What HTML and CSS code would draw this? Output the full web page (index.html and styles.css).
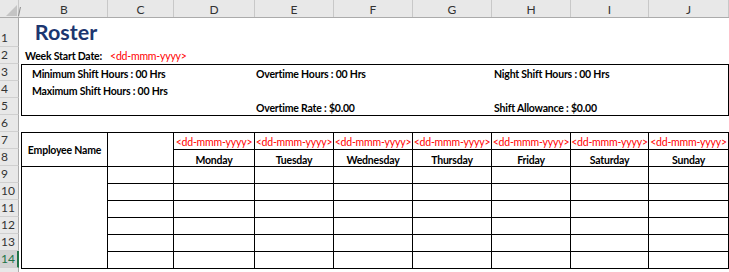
FILE: index.html
```html
<!DOCTYPE html>
<html lang="en">
<head>
<meta charset="utf-8">
<title>Roster</title>
<link rel="stylesheet" href="styles.css">
</head>
<body>
<div class="sheet">
  <div class="colhead">
    <div class="corner"><svg width="11" height="11" viewBox="0 0 11 11"><polygon points="11,0 11,11 0,11" fill="#c4c4c4"/></svg></div>
    <div class="hidden-a"><span class="tick"></span></div>
    <div class="ch w-b">B</div>
    <div class="ch w-c">C</div>
    <div class="ch w-d">D</div>
    <div class="ch w-e">E</div>
    <div class="ch w-f">F</div>
    <div class="ch w-g">G</div>
    <div class="ch w-h">H</div>
    <div class="ch w-i">I</div>
    <div class="ch w-j">J</div>
  </div>
  <div class="body">
    <div class="rowheads">
      <div class="rh tall">1</div>
      <div class="rh">2</div>
      <div class="rh">3</div>
      <div class="rh">4</div>
      <div class="rh">5</div>
      <div class="rh">6</div>
      <div class="rh">7</div>
      <div class="rh">8</div>
      <div class="rh">9</div>
      <div class="rh">10</div>
      <div class="rh">11</div>
      <div class="rh">12</div>
      <div class="rh">13</div>
      <div class="rh sel">14</div>
      <div class="rh"></div>
    </div>
    <div class="gap-a"></div>
    <div class="content">
      <div class="title-row"><h1 class="title">Roster</h1></div>
      <div class="week-row">
        <span class="week-label">Week Start Date:</span>
        <span class="red week-date">&lt;dd-mmm-yyyy&gt;</span>
      </div>
      <div class="info-box">
        <div class="info first">Minimum Shift Hours : 00 Hrs</div>
        <div class="info mid">Overtime Hours : 00 Hrs</div>
        <div class="info last">Night Shift Hours : 00 Hrs</div>
        <div class="info first">Maximum Shift Hours : 00 Hrs</div>
        <div class="info mid"></div>
        <div class="info last"></div>
        <div class="info first"></div>
        <div class="info mid">Overtime Rate : $0.00</div>
        <div class="info last">Shift Allowance : $0.00</div>
      </div>
      <div class="spacer"></div>
      <div class="roster">
        <div class="cell emp">Employee Name</div>
        <div class="cell blank2"></div>
        <div class="cell red date">&lt;dd-mmm-yyyy&gt;</div>
        <div class="cell red date">&lt;dd-mmm-yyyy&gt;</div>
        <div class="cell red date">&lt;dd-mmm-yyyy&gt;</div>
        <div class="cell red date">&lt;dd-mmm-yyyy&gt;</div>
        <div class="cell red date">&lt;dd-mmm-yyyy&gt;</div>
        <div class="cell red date">&lt;dd-mmm-yyyy&gt;</div>
        <div class="cell red date">&lt;dd-mmm-yyyy&gt;</div>
        <div class="cell day">Monday</div>
        <div class="cell day">Tuesday</div>
        <div class="cell day">Wednesday</div>
        <div class="cell day">Thursday</div>
        <div class="cell day">Friday</div>
        <div class="cell day">Saturday</div>
        <div class="cell day">Sunday</div>
        <div class="cell empblock"></div>
        <div class="cell"></div><div class="cell"></div><div class="cell"></div><div class="cell"></div><div class="cell"></div><div class="cell"></div><div class="cell"></div><div class="cell"></div>
        <div class="cell"></div><div class="cell"></div><div class="cell"></div><div class="cell"></div><div class="cell"></div><div class="cell"></div><div class="cell"></div><div class="cell"></div>
        <div class="cell"></div><div class="cell"></div><div class="cell"></div><div class="cell"></div><div class="cell"></div><div class="cell"></div><div class="cell"></div><div class="cell"></div>
        <div class="cell"></div><div class="cell"></div><div class="cell"></div><div class="cell"></div><div class="cell"></div><div class="cell"></div><div class="cell"></div><div class="cell"></div>
        <div class="cell"></div><div class="cell"></div><div class="cell"></div><div class="cell"></div><div class="cell"></div><div class="cell"></div><div class="cell"></div><div class="cell"></div>
        <div class="cell"></div><div class="cell"></div><div class="cell"></div><div class="cell"></div><div class="cell"></div><div class="cell"></div><div class="cell"></div><div class="cell"></div>
      </div>
    </div>
  </div>
</div>
</body>
</html>
```
FILE: styles.css
```css
* { box-sizing: border-box; }
html, body {
  margin: 0;
  padding: 0;
  background: #fff;
  overflow: hidden;
}
.sheet {
  width: 729px;
  height: 272px;
  overflow: hidden;
  font-family: Lato, "Liberation Sans", sans-serif;
  font-size: 10.5px;
  letter-spacing: -0.2px;
  color: #000;
}

/* column header */
.colhead {
  display: flex;
  height: 18px;
  background: #e8e8e8;
  border-bottom: 1px solid #ababab;
  letter-spacing: 0;
}
.corner {
  width: 19px;
  flex: none;
  border-right: 1px solid #c8c8c8;
  display: flex;
  align-items: flex-end;
  justify-content: flex-end;
  padding: 0 1px 1px 0;
}
.hidden-a {
  width: 2px;
  flex: none;
  position: relative;
}
.tick {
  position: absolute;
  left: 0;
  top: 7px;
  width: 1px;
  height: 9px;
  background: #8a8a8a;
  transform: skewX(-12deg);
}
.ch {
  flex: none;
  border-right: 1px solid #c8c8c8;
  display: flex;
  align-items: center;
  justify-content: center;
  font-size: 12px;
  color: #333;
  padding-top: 1px;
}
.w-b { width: 87px; }
.w-c { width: 66px; }
.w-d { width: 81px; }
.w-e, .w-f, .w-g, .w-h { width: 79px; }
.w-i { width: 78px; }
.w-j { width: 80px; }

/* body */
.body {
  display: flex;
}
.rowheads {
  width: 19px;
  flex: none;
  display: flex;
  flex-direction: column;
  letter-spacing: 0;
}
.rh {
  height: 17px;
  flex: none;
  background: #e8e8e8;
  border-right: 1px solid #ababab;
  border-bottom: 1px solid #d0d0d0;
  display: flex;
  align-items: flex-end;
  padding: 0 0 1px 1px;
  font-size: 12px;
  line-height: 14px;
  color: #333;
}
.rh.tall { height: 29px; }
.rh.sel {
  background: #d2d2d2;
  color: #217346;
  border-right: 2px solid #217346;
}
.gap-a {
  width: 2px;
  flex: none;
}
.content {
  width: 708px;
  flex: none;
  display: flex;
  flex-direction: column;
}

.title-row {
  height: 29px;
  width: 86px;
  display: flex;
  justify-content: center;
  align-items: flex-end;
}
.title {
  margin: 0 0 3px 4px;
  font-size: 21.5px;
  line-height: 24px;
  font-weight: 700;
  letter-spacing: 0;
  color: #1c3670;
}

.week-row {
  height: 17px;
  display: grid;
  grid-template-columns: 87px 1fr;
  line-height: 16px;
  padding-top: 1px;
  white-space: nowrap;
}
.week-label {
  font-weight: 700;
  padding-left: 4px;
}
.week-date { padding-left: 2px; }
.red { color: #ff0000; }

.info-box {
  height: 52px;
  border: 1px solid #000;
  display: grid;
  grid-template-columns: 233px 237px 1fr;
  grid-template-rows: 17px 17px 16px;
  font-weight: 700;
  line-height: 16px;
}
.info { white-space: nowrap; padding-top: 1px; }
.info.first { padding-left: 10px; }
.info.mid { padding-left: 1px; }
.info.last { padding-left: 2px; }

.spacer { height: 16px; }

.roster {
  display: grid;
  grid-template-columns: 86px 66px 81px 79px 79px 79px 79px 78px 80px;
  grid-auto-rows: 17px;
  border-top: 1px solid #000;
  border-left: 1px solid #000;
  width: 709px;
}
.cell {
  border-right: 1px solid #000;
  border-bottom: 1px solid #000;
  min-width: 0;
}
.emp {
  grid-row: span 2;
  display: flex;
  align-items: center;
  justify-content: center;
  font-weight: 700;
}
.blank2 { grid-row: span 2; }
.empblock { grid-row: span 6; }
.date {
  text-align: center;
  white-space: nowrap;
  overflow: hidden;
  line-height: 16px;
  padding-top: 1px;
}
.day {
  text-align: center;
  font-weight: 700;
  line-height: 16px;
  padding-top: 2px;
}
```
